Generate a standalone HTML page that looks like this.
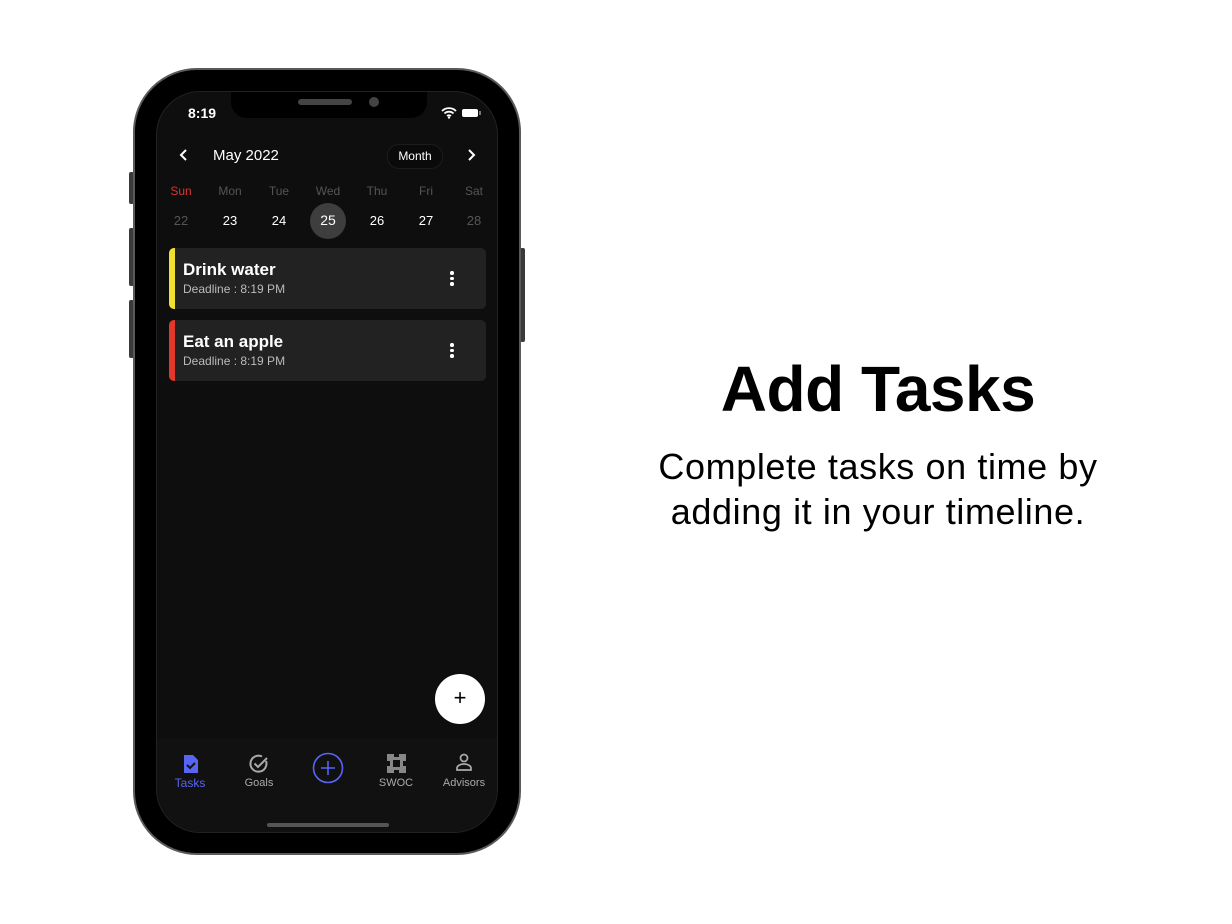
<!DOCTYPE html><html><head><style>
body{margin:0;width:1232px;height:924px;background:#fff;position:relative;overflow:hidden;font-family:"Liberation Sans",sans-serif}
.a{position:absolute}
.phone{left:133px;top:68px;width:384px;height:783px;background:#000;border:2px solid #5a5a5a;border-radius:64px}
.screen{left:156px;top:91px;width:342px;height:742px;background:#0e0e0e;border-radius:44px;overflow:hidden;border:1px solid #222;box-sizing:border-box}
.w{color:#fff}
.card{left:12px;width:317px;height:61px;background:#222;border-radius:5px;overflow:hidden}
.card .bar{left:0;top:0;width:6px;height:61px}
.card .t{left:14px;top:12px;font-size:17px;font-weight:bold;color:#fff}
.card .d{left:14px;top:34px;font-size:12px;color:#bbb}
.dots{left:281px;top:23px;width:4px}
.dots i{display:block;width:3.5px;height:3.5px;background:#fff;border-radius:50%;margin-bottom:2px}
.day{width:40px;text-align:center;font-size:12px}
.nl{font-size:11px;color:#aaa;text-align:center;width:60px}
</style></head><body>
<div class="a" style="left:129px;top:172px;width:5px;height:32px;background:#3a3a3a;border-radius:2px"></div>
<div class="a" style="left:129px;top:228px;width:5px;height:58px;background:#3a3a3a;border-radius:2px"></div>
<div class="a" style="left:129px;top:300px;width:5px;height:58px;background:#3a3a3a;border-radius:2px"></div>
<div class="a" style="left:520px;top:248px;width:5px;height:94px;background:#3a3a3a;border-radius:2px"></div>
<div class="a phone"></div>
<div class="a screen">
 <div class="a" style="left:74px;top:-1px;width:196px;height:27px;background:#000;border-radius:0 0 16px 16px"></div>
 <div class="a" style="left:141px;top:7px;width:54px;height:6px;background:#444;border-radius:3px"></div>
 <div class="a" style="left:212px;top:5px;width:10px;height:10px;background:#444;border-radius:50%"></div>
 <div class="a w" style="left:31px;top:13px;font-size:14px;font-weight:bold">8:19</div>
 <svg class="a" style="left:284px;top:15px" width="16" height="12" viewBox="0 0 16 12"><path d="M1 4a10 10 0 0 1 14 0M3.5 6.5a6.5 6.5 0 0 1 9 0M6 9a3 3 0 0 1 4 0" stroke="#fff" stroke-width="1.8" fill="none"/><circle cx="8" cy="10.5" r="1.2" fill="#fff"/></svg>
 <div class="a" style="left:305px;top:17px;width:16px;height:8px;background:#fff;border-radius:2px"></div>
 <div class="a" style="left:322px;top:19px;width:1.5px;height:4px;background:#777"></div>
 <svg class="a" style="left:22px;top:57px" width="10" height="12"><path d="M7 1L2 6l5 5" stroke="#fff" stroke-width="2" fill="none"/></svg>
 <div class="a w" style="left:56px;top:55px;font-size:15px">May 2022</div>
 <div class="a w" style="left:230px;top:52px;width:54px;height:23px;border:1px solid #1c1c1c;background:#0a0a0a;border-radius:12px;font-size:12px;text-align:center;line-height:23px">Month</div>
 <svg class="a" style="left:309px;top:57px" width="10" height="12"><path d="M3 1l5 5-5 5" stroke="#fff" stroke-width="2" fill="none"/></svg>
 <div class="a day" style="left:4px;top:92px;color:#d33">Sun</div>
 <div class="a day" style="left:53px;top:92px;color:#555">Mon</div>
 <div class="a day" style="left:102px;top:92px;color:#555">Tue</div>
 <div class="a day" style="left:151px;top:92px;color:#555">Wed</div>
 <div class="a day" style="left:200px;top:92px;color:#555">Thu</div>
 <div class="a day" style="left:249px;top:92px;color:#555">Fri</div>
 <div class="a day" style="left:297px;top:92px;color:#555">Sat</div>
 <div class="a" style="left:153px;top:111px;width:36px;height:36px;background:#3e3e3e;border-radius:50%"></div>
 <div class="a day" style="left:4px;top:121px;color:#555;font-size:13px">22</div>
 <div class="a day w" style="left:53px;top:121px;font-size:13px">23</div>
 <div class="a day w" style="left:102px;top:121px;font-size:13px">24</div>
 <div class="a day w" style="left:151px;top:120px;font-size:14px">25</div>
 <div class="a day w" style="left:200px;top:121px;font-size:13px">26</div>
 <div class="a day w" style="left:249px;top:121px;font-size:13px">27</div>
 <div class="a day" style="left:297px;top:121px;color:#555;font-size:13px">28</div>
 <div class="a card" style="top:156px"><div class="a bar" style="background:#f0e130"></div><div class="a t">Drink water</div><div class="a d">Deadline : 8:19 PM</div><div class="a dots"><i></i><i></i><i></i></div></div>
 <div class="a card" style="top:228px"><div class="a bar" style="background:#e0392b"></div><div class="a t">Eat an apple</div><div class="a d">Deadline : 8:19 PM</div><div class="a dots"><i></i><i></i><i></i></div></div>
 <div class="a" style="left:278px;top:582px;width:50px;height:50px;background:#fff;border-radius:50%;text-align:center;line-height:48px;font-size:22px;color:#000">+</div>
 <div class="a" style="left:0;top:646px;width:342px;height:96px;background:#111"></div>
 <svg class="a" style="left:25px;top:662px" width="18" height="20" viewBox="0 0 18 20"><path d="M2 1h9l5 5v13H2z" fill="#5865f2"/><path d="M5 11l3 3 5-5" stroke="#111" stroke-width="2" fill="none"/></svg>
 <div class="a nl" style="left:3px;top:684px;color:#5865f2;font-size:12px">Tasks</div>
 <svg class="a" style="left:91px;top:661px" width="22" height="22" viewBox="0 0 22 22"><path d="M18 8A8 8 0 1 1 14 3.5" stroke="#aaa" stroke-width="2" fill="none"/><path d="M6.5 10.5l3.5 3.5 9-9" stroke="#aaa" stroke-width="2" fill="none"/></svg>
 <div class="a nl" style="left:72px;top:685px">Goals</div>
 <svg class="a" style="left:155px;top:660px" width="32" height="32"><circle cx="16" cy="16" r="14.5" stroke="#5865f2" stroke-width="1.6" fill="none"/><path d="M16 9v14M9 16h14" stroke="#5865f2" stroke-width="1.6"/></svg>
 <svg class="a" style="left:230px;top:662px" width="19" height="19" viewBox="0 0 19 19"><path d="M0 0h7v3h5V0h7v7h-3v5h3v7h-7v-3H7v3H0v-7h3V7H0z" fill="#888"/><path d="M6 6h7v7H6z" fill="#111"/></svg>
 <div class="a nl" style="left:209px;top:685px">SWOC</div>
 <svg class="a" style="left:298px;top:661px" width="18" height="18" viewBox="0 0 18 18"><circle cx="9" cy="5" r="3.5" stroke="#aaa" stroke-width="1.7" fill="none"/><path d="M2 17v-2c0-2 3-4 7-4s7 2 7 4v2z" stroke="#aaa" stroke-width="1.7" fill="none"/></svg>
 <div class="a nl" style="left:277px;top:685px">Advisors</div>
 <div class="a" style="left:110px;top:731px;width:122px;height:4px;background:#555;border-radius:2px"></div>
</div>
<div class="a" style="left:560px;top:352px;width:636px;text-align:center;font-size:64px;font-weight:bold;color:#000;letter-spacing:-0.5px">Add Tasks</div>
<div class="a" style="left:540px;top:444px;width:676px;text-align:center;font-size:36px;line-height:45px;color:#000;letter-spacing:0.6px">Complete tasks on time by<br>adding it in your timeline.</div>
</body></html>
